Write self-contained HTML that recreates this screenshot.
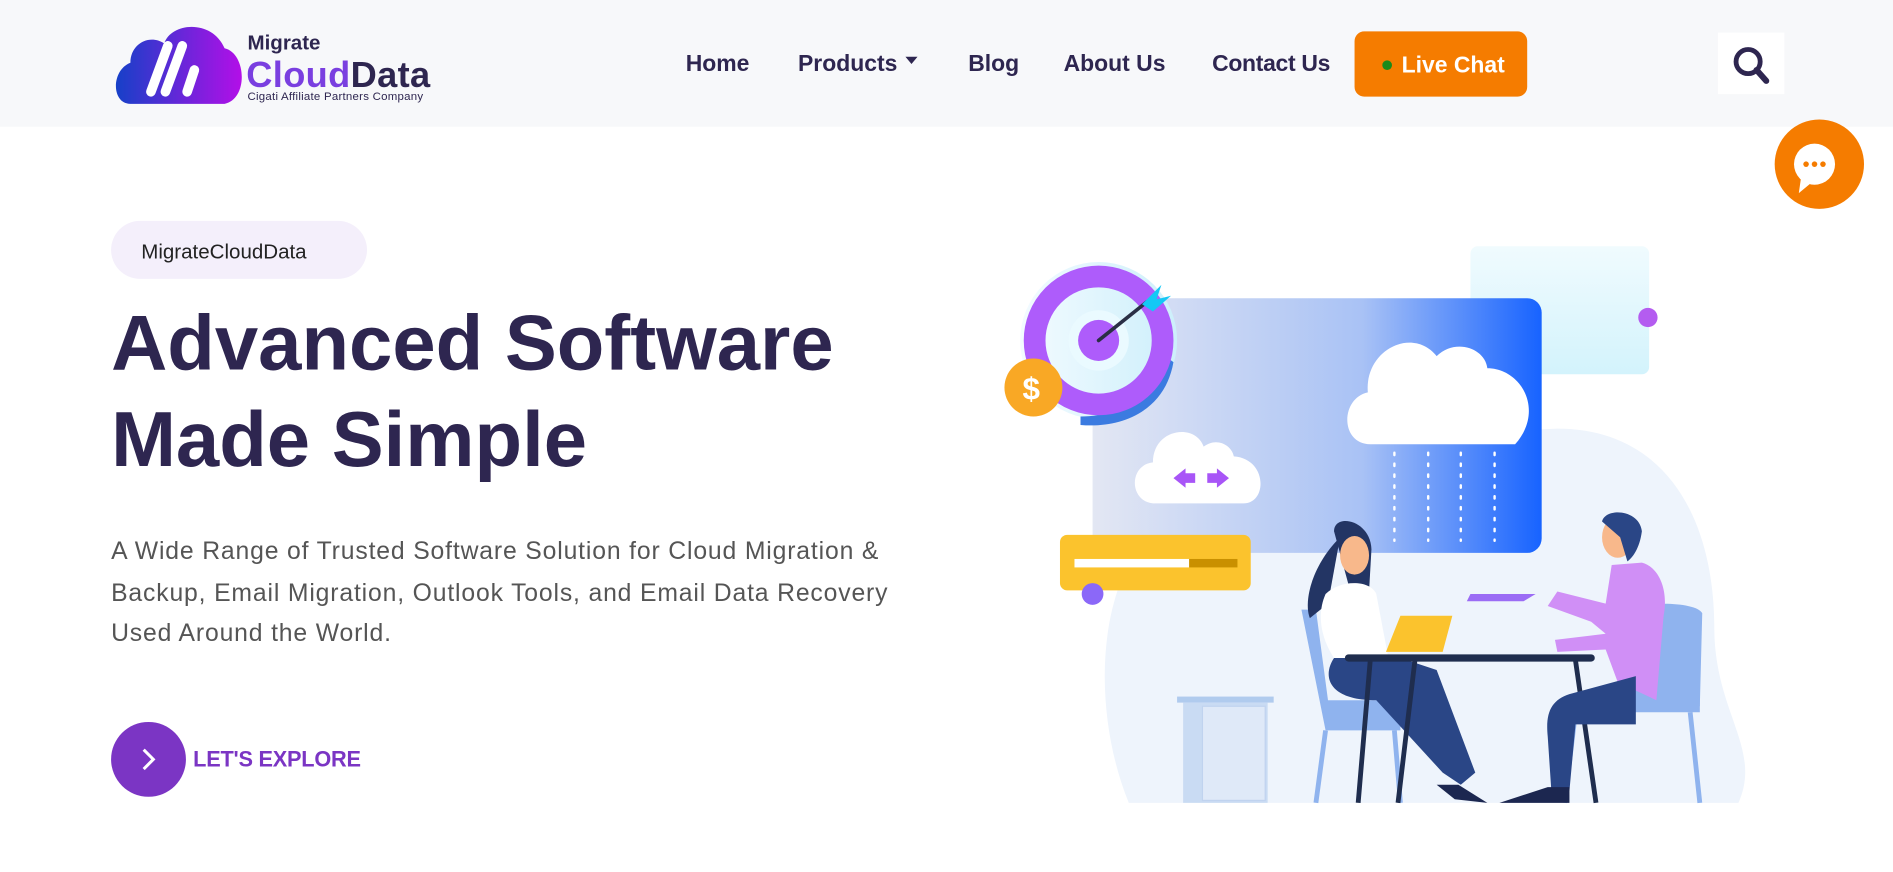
<!DOCTYPE html>
<html><head><meta charset="utf-8">
<style>
html,body{margin:0;padding:0;background:#fff;}
body{width:1893px;height:872px;overflow:hidden;}
svg{display:block;}
text{font-family:"Liberation Sans",sans-serif;}
</style></head>
<body>
<svg width="1893" height="872" viewBox="0 0 1568 722.3" xmlns="http://www.w3.org/2000/svg">
<defs>
<linearGradient id="lg" x1="0" y1="0" x2="1" y2="0"><stop offset="0" stop-color="#1640c8"/><stop offset="1" stop-color="#b30fe8"/></linearGradient>
<linearGradient id="pg" x1="0" y1="0" x2="1" y2="0"><stop offset="0" stop-color="#e3e7f3"/><stop offset=".6" stop-color="#a9c2f5"/><stop offset="1" stop-color="#1763ff"/></linearGradient>
<linearGradient id="cg" x1="0" y1="0" x2="0" y2="1"><stop offset="0" stop-color="#f0fbfe"/><stop offset="1" stop-color="#d3f3fc"/></linearGradient>
<linearGradient id="tg" x1="0" y1="0" x2="1" y2="0"><stop offset="0" stop-color="#f3fbff"/><stop offset="1" stop-color="#cdeffb"/></linearGradient>
</defs>
<rect x="0" y="0" width="1568" height="105" fill="#f7f8fa"/>
<path d="M108 86 C92 86 92 58 108 52 C108 36 124 28 136 36 C142 18 176 16 186 40 C204 44 206 82 186 86 Z" fill="url(#lg)"/>
<path d="M125 76 L139 38 M137 76 L151 38" stroke="#fff" stroke-width="8" stroke-linecap="round"/>
<path d="M155 76 L161 58" stroke="#fff" stroke-width="8" stroke-linecap="round"/>
<text x="205" y="41" font-size="17" font-weight="bold" fill="#2e2650">Migrate</text>
<text x="204" y="72" font-size="30" font-weight="bold" fill="#7a3fe0" letter-spacing="0.3">Cloud<tspan fill="#2e2650">Data</tspan></text>
<text x="205" y="83" font-size="9.5" fill="#2e2650" letter-spacing="0.2">Cigati Affiliate Partners Company</text>
<g font-size="19" fill="#2e2650" font-weight="bold">
<text x="568" y="59">Home</text>
<text x="661" y="59">Products</text>
<text x="802" y="59">Blog</text>
<text x="881" y="59">About Us</text>
<text x="1004" y="59" textLength="98">Contact Us</text>
</g>
<path d="M750 47 L760 47 L755 53 Z" fill="#2e2650"/>
<rect x="1122" y="26" width="143" height="54" rx="8" fill="#f57c00"/>
<circle cx="1149" cy="54" r="4" fill="#1a8a1a"/>
<text x="1161" y="60" font-size="19" font-weight="bold" fill="#fff">Live Chat</text>
<rect x="1423" y="27" width="55" height="51" fill="#fff"/>
<circle cx="1448" cy="51" r="10" fill="none" stroke="#2e2650" stroke-width="4"/>
<path d="M1455 58 L1463 67" stroke="#2e2650" stroke-width="5" stroke-linecap="round"/>
<circle cx="1507" cy="136" r="37" fill="#f57c00"/>
<circle cx="1503" cy="136" r="17" fill="#fff"/>
<path d="M1492 146 L1490 160 L1502 150 Z" fill="#fff"/>
<circle cx="1496" cy="136" r="2.3" fill="#f57c00"/><circle cx="1503" cy="136" r="2.3" fill="#f57c00"/><circle cx="1510" cy="136" r="2.3" fill="#f57c00"/>
<rect x="92" y="183" width="212" height="48" rx="24" fill="#f4effb"/>
<text x="117" y="214" font-size="17" fill="#222">MigrateCloudData</text>
<g font-size="64.5" font-weight="bold" fill="#2e2650">
<text x="92" y="306">Advanced Software</text>
<text x="92" y="386">Made Simple</text>
</g>
<g font-size="20.5" fill="#555" letter-spacing="0.7">
<text x="92" y="463">A Wide Range of Trusted Software Solution for Cloud Migration &amp;</text>
<text x="92" y="498">Backup, Email Migration, Outlook Tools, and Email Data Recovery</text>
<text x="92" y="531">Used Around the World.</text>
</g>
<circle cx="123" cy="629" r="31" fill="#7b35c4"/>
<path d="M119 621 L127 629 L119 637" fill="none" stroke="#fff" stroke-width="2.5"/>
<text x="160" y="635" font-size="18" font-weight="bold" fill="#7b35c4" textLength="139">LET'S EXPLORE</text>
<path d="M935 665 C900 580 905 440 1000 410 C1080 385 1150 360 1290 355 C1380 355 1420 430 1420 520 C1420 590 1460 620 1440 665 Z" fill="#eef4fc"/>
<rect x="1218" y="204" width="148" height="106" rx="6" fill="url(#cg)"/>
<circle cx="1365" cy="263" r="8" fill="#b45cf0"/>
<rect x="905" y="247" width="372" height="211" rx="12" fill="url(#pg)"/>
<circle cx="910" cy="282" r="65" fill="url(#tg)"/>
<path d="M972 300 C965 340 930 355 895 352 L895 345 C930 345 960 325 965 295 Z" fill="#3b7be0"/>
<circle cx="910" cy="282" r="53" fill="none" stroke="#ae5cfb" stroke-width="18"/>
<circle cx="910" cy="282" r="25" fill="#eafaff"/>
<circle cx="910" cy="282" r="17" fill="#ae5cfb"/>
<path d="M910 282 L950 250" stroke="#2a2f45" stroke-width="3" stroke-linecap="round"/>
<path d="M946 252 L962 236 L958 248 L970 245 L955 258 Z" fill="#14c8f5"/>
<circle cx="856" cy="321" r="24" fill="#f9a825"/>
<text x="847" y="331" font-size="26" fill="#fff" font-weight="bold">$</text>
<path d="M1135 368 C1110 368 1110 330 1133 325 C1130 290 1170 270 1190 295 C1205 280 1230 288 1232 305 C1260 305 1280 340 1255 368 Z" fill="#fff"/>
<path d="M955 417 C935 415 935 385 955 383 C955 355 990 350 997 370 C1007 362 1020 368 1022 378 C1050 380 1050 417 1030 417 Z" fill="#fff"/>
<path d="M972 396 L982 388 L982 392 L990 392 L990 400 L982 400 L982 404 Z M1018 396 L1008 388 L1008 392 L1000 392 L1000 400 L1008 400 L1008 404 Z" fill="#a855f7"/>
<g stroke="#fff" stroke-width="2" stroke-dasharray="2 7" stroke-linecap="round">
<path d="M1155 375 V448 M1183 375 V448 M1210 375 V448 M1238 375 V448"/>
</g>
<rect x="878" y="443" width="158" height="46" rx="6" fill="#fbc32d"/>
<rect x="890" y="463" width="95" height="7" fill="#fff"/>
<rect x="985" y="463" width="40" height="7" fill="#c99000"/>
<circle cx="905" cy="492" r="9" fill="#8b68f8"/>
<rect x="975" y="577" width="80" height="5" fill="#b0cbee"/>
<rect x="980" y="582" width="70" height="83" fill="#c9dbf3"/>
<rect x="996" y="585" width="52" height="78" fill="#dfe9f8" stroke="#c0d3ef"/>
<path d="M1078 505 L1098 605 L1160 605 L1160 580 L1100 580 L1090 505 Z" fill="#8fb3ee"/>
<path d="M1098 605 L1090 665 M1155 605 L1160 665" stroke="#8fb3ee" stroke-width="4"/>
<path d="M1110 445 C1085 470 1080 500 1085 512 L1100 500 Z" fill="#233564"/>
<path d="M1105 440 C1105 425 1135 430 1136 455 L1134 490 L1118 488 Z" fill="#233564"/>
<ellipse cx="1122" cy="460" rx="12" ry="16" fill="#f8b88b"/>
<path d="M1098 492 C1110 480 1135 480 1140 492 L1150 545 L1105 545 C1095 530 1090 510 1098 492 Z" fill="#fff"/>
<path d="M1105 545 C1095 560 1100 580 1140 580 L1195 640 L1210 650 L1222 640 L1190 555 L1160 545 Z" fill="#2a4686"/>
<path d="M1190 650 L1205 662 L1232 665 L1208 650 Z" fill="#1c2750"/>
<path d="M1148 540 L1160 510 L1203 510 L1195 540 Z" fill="#fbc32d"/>
<path d="M1117 545 H1318" stroke="#1f2d4e" stroke-width="6" stroke-linecap="round"/>
<path d="M1135 547 L1125 665 M1172 547 L1158 665 M1305 547 L1322 665" stroke="#1f2d4e" stroke-width="4"/>
<path d="M1350 505 C1360 498 1405 498 1410 508 L1408 585 L1355 585 Z" fill="#8fb3ee"/>
<path d="M1300 580 H1408 V590 H1300 Z" fill="#8fb3ee"/>
<path d="M1305 590 L1296 665 M1400 590 L1408 665" stroke="#8fb3ee" stroke-width="4"/>
<ellipse cx="1340" cy="445" rx="13" ry="17" fill="#f8b88b"/>
<path d="M1327 432 C1330 420 1358 422 1360 440 C1358 455 1352 462 1348 465 L1342 445 Z" fill="#2a4686"/>
<path d="M1335 468 L1360 466 C1375 470 1382 490 1378 510 L1372 580 L1340 565 L1330 538 L1290 540 L1288 530 L1330 525 L1318 515 L1282 502 L1290 490 L1330 500 Z" fill="#d08ff6"/>
<path d="M1218 492 L1272 492 L1262 498 L1215 498 Z" fill="#9b6cf5"/>
<path d="M1355 560 L1300 575 C1285 580 1280 590 1282 610 L1285 655 L1300 655 L1305 600 L1355 600 Z" fill="#2a4686"/>
<path d="M1282 652 L1300 652 L1300 665 L1242 665 Z" fill="#1c2750"/>
</svg>
</body></html>
